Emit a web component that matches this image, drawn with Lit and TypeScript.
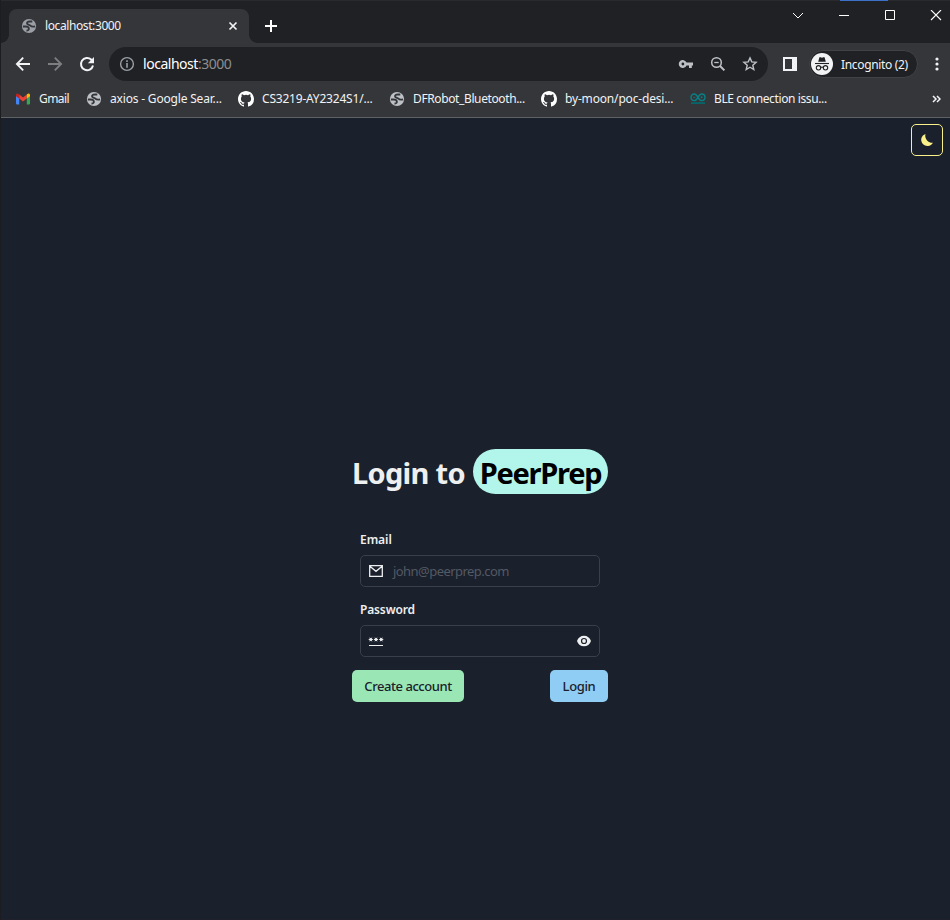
import { LitElement, html, css, svg } from "lit";
import { customElement, property } from "lit/decorators.js";

const globe = svg`<circle cx="8" cy="8" r="7.100" fill="currentColor"/><path d="M11.300 3.500H8.800C6.600 3.500 5.600 4.500 6.100 5.700 6.600 6.900 8.500 6.600 9.400 7.600 10.400 8.700 11.800 8.800 14.100 8.300M1.900 8.500H4.600C6.500 8.500 7.900 9.300 7.900 10.700 7.900 12 6.900 12.600 5.500 12.500" fill="none" stroke="#35363a" stroke-width="1.800"/>`;
const github = svg`<path fill="#fff" fill-rule="evenodd" d="M8 0C3.580 0 0 3.580 0 8c0 3.540 2.290 6.530 5.470 7.590.4.070.55-.17.55-.38 0-.19-.01-.82-.01-1.490-2.010.37-2.530-.49-2.690-.94-.09-.23-.48-.94-.82-1.130-.28-.15-.68-.52-.01-.53.63-.01 1.080.58 1.230.82.720 1.210 1.870.87 2.330.66.070-.52.280-.87.510-1.070-1.780-.2-3.640-.89-3.640-3.950 0-.87.310-1.590.82-2.150-.08-.2-.36-1.020.08-2.120 0 0 .67-.21 2.200.82a7.600 7.600 0 0 1 4 0c1.530-1.040 2.200-.82 2.200-.82.440 1.100.160 1.920.080 2.120.510.560.820 1.270.820 2.150 0 3.070-1.870 3.750-3.650 3.950.290.250.540.730.540 1.480 0 1.070-.01 1.930-.01 2.200 0 .210.150.460.550.380A8 8 0 0 0 16 8c0-4.420-3.580-8-8-8z"/>`;

const icons: Record<string, { box: string; art: unknown }> = {
  globe: { box: "0 0 16 16", art: globe },
  github: { box: "0 0 16 16", art: github },
  gmail: {
    box: "0 0 16 16",
    art: svg`<path fill="#4285f4" d="M1 4.200 4.200 6.600V13.500H2A1 1 0 0 1 1 12.500z"/><path fill="#34a853" d="M11.800 6.600 15 4.200V12.500A1 1 0 0 1 14 13.500H11.800z"/><path fill="#ea4335" d="M4.200 3.500 8 6.400 11.800 3.500V7.500L8 10.400 4.200 7.500z"/><path fill="#c5221f" d="M1 4C1 2.300 2.700 2 3.700 3L4.200 3.500V7.500L1 5.200z"/><path fill="#fbbc04" d="M15 4C15 2.300 13.300 2 12.300 3L11.800 3.500V7.500L15 5.200z"/>`,
  },
  arduino: {
    box: "0 0 16 16",
    art: svg`<g fill="none" stroke="#078184" stroke-width="1.400" transform="translate(0 .4)"><path d="M8 5.900C6.600 3.300 5.800 2.600 4.300 2.600a3.300 3.300 0 0 0 0 6.600C5.800 9.200 6.600 8.500 8 5.900 9.400 3.300 10.200 2.600 11.700 2.600a3.300 3.300 0 0 1 0 6.600C10.200 9.200 9.400 8.500 8 5.900z"/><path d="M3.200 5.900h2.200M10.600 5.900h2.200M11.700 4.800v2.200" stroke-width=".8"/></g><path d="M1 11.100h14v1.900H1z" fill="#086467"/>`,
  },
  close: { box: "0 0 10 10", art: svg`<path d="M1.500 1.500l7 7M8.500 1.500 1.500 8.500" fill="none" stroke="currentColor" stroke-width="1.700"/>` },
  plus: { box: "0 0 12 12", art: svg`<path d="M6 0v12M0 6h12" fill="none" stroke="currentColor" stroke-width="2"/>` },
  back: { box: "0 0 16 16", art: svg`<path d="M15 8H2.200M8.200 1.700 1.900 8l6.300 6.300" fill="none" stroke="currentColor" stroke-width="1.900"/>` },
  forward: { box: "0 0 16 16", art: svg`<path d="M1 8h12.800M7.800 1.700 14.100 8l-6.300 6.300" fill="none" stroke="currentColor" stroke-width="1.900"/>` },
  reload: { box: "0 0 16 16", art: svg`<path d="M14 9.500A6.100 6.100 0 1 1 12.200 3.600L13.500 5" fill="none" stroke="currentColor" stroke-width="2"/><path d="M15 1v6.200H8.800z" fill="currentColor"/>` },
  info: { box: "0 0 16 16", art: svg`<circle cx="8" cy="8" r="6.400" fill="none" stroke="currentColor" stroke-width="1.400"/><path d="M7.200 7h1.600v4.700H7.200zM7.200 4.300h1.600v1.600H7.200z" fill="currentColor"/>` },
  key: { box: "0 0 16 16", art: svg`<path fill="currentColor" fill-rule="evenodd" d="M8.500 6.600A4 4 0 1 0 8.500 9.400H11V12h2.800V9.400H15V6.600zM4.900 6.600a1.400 1.400 0 1 1 0 2.800 1.400 1.400 0 0 1 0-2.800z"/>` },
  zoom: { box: "0 0 16 16", art: svg`<g fill="none" stroke="currentColor"><circle cx="6.500" cy="6.500" r="4.800" stroke-width="1.500"/><path d="M10 10l4.400 4.400" stroke-width="2"/><path d="M4.300 6.500h4.400" stroke-width="1.300"/></g>` },
  star: { box: "0 0 16 16", art: svg`<path d="M8 1.900l1.750 4 4.350.4-3.300 2.900 1 4.300L8 11.200l-3.800 2.300 1-4.300-3.300-2.900 4.350-.4z" fill="none" stroke="currentColor" stroke-width="1.400"/>` },
  panel: { box: "0 0 14 14", art: svg`<path fill="currentColor" fill-rule="evenodd" d="M0 0h14v14H0zM2 2v10h7V2z"/>` },
  incognito: {
    box: "0 0 22 22",
    art: svg`<circle cx="11" cy="11" r="11" fill="#f1f3f4"/><path d="M7.200 8.700 8.300 4.700Q8.600 3.900 9.400 4.200L11 4.700 12.600 4.200Q13.400 3.900 13.700 4.700L14.800 8.700z" fill="#202124"/><path d="M4 10.500h14" stroke="#202124" stroke-width="1.100"/><g fill="none" stroke="#202124" stroke-width="1.100"><circle cx="7.500" cy="14.800" r="2.200"/><circle cx="14.500" cy="14.800" r="2.200"/><path d="M9.700 14.500Q11 13.600 12.300 14.500"/></g>`,
  },
  dots: { box: "0 0 4 14", art: svg`<g fill="currentColor"><circle cx="2" cy="2" r="1.600"/><circle cx="2" cy="7" r="1.600"/><circle cx="2" cy="12" r="1.600"/></g>` },
  more: { box: "0 0 9 8", art: svg`<path d="M1 1l3 3-3 3M5 1l3 3-3 3" fill="none" stroke="currentColor" stroke-width="1.500"/>` },
  chevron: { box: "0 0 12 12", art: svg`<path d="M1 3l5 5 5-5" fill="none" stroke="currentColor" stroke-width="1"/>` },
  minimize: { box: "0 0 12 12", art: svg`<path d="M1 5h10v1H1z" fill="currentColor"/>` },
  maximize: { box: "0 0 12 12", art: svg`<path d="M1.500 .5h9v9h-9z" fill="none" stroke="currentColor"/>` },
  exit: { box: "0 0 12 12", art: svg`<path d="M1 0l10 10M11 0 1 10" fill="none" stroke="currentColor" stroke-width="1.100"/>` },
  moon: { box: "0 0 14 14", art: svg`<path d="M5.500.9A7 7 0 0 0 12.900 9.700 6.200 6.200 0 1 1 5.500.9z" fill="currentColor"/>` },
  mail: { box: "0 0 16 16", art: svg`<path d="M1.700 2.700h12.600v10.600H1.700zM1.900 3.200 8 8.300l6.100-5.100" fill="none" stroke="currentColor" stroke-width="1.300"/>` },
  password: { box: "0 0 16 16", art: svg`<g fill="currentColor"><circle cx="2.800" cy="6.500" r="1.350"/><circle cx="8" cy="6.500" r="1.350"/><circle cx="13.200" cy="6.500" r="1.350"/></g><path d="M.7 6.500h4.200M1.750 4.700l2.100 3.600M3.850 4.700l-2.100 3.600M5.900 6.500h4.200M6.950 4.700l2.100 3.600M9.050 4.700l-2.100 3.600M11.100 6.500h4.200M12.150 4.700l2.100 3.600M14.250 4.700l-2.100 3.600" stroke="currentColor" stroke-width=".9"/><path d="M1 12h14v1H1z" fill="currentColor"/>` },
  eye: { box: "0 0 14 14", art: svg`<path fill="currentColor" fill-rule="evenodd" d="M7 1.700C3.700 1.700 1.100 3.700 0 7c1.100 3.300 3.700 5.300 7 5.300s5.900-2 7-5.300C12.900 3.700 10.300 1.700 7 1.700zM7 3.900a3.100 3.100 0 1 1 0 6.200 3.100 3.100 0 0 1 0-6.200z"/><circle cx="7" cy="7" r="1.900" fill="currentColor"/>` },
};

@customElement("ui-icon")
class UiIcon extends LitElement {
  @property() name = "globe";
  static styles = css`
    :host { display: block; flex: none; width: 16px; height: 16px; }
    svg { display: block; width: 100%; height: 100%; }
  `;
  render() {
    const icon = icons[this.name];
    return html`<svg viewBox=${icon.box}>${icon.art}</svg>`;
  }
}

@customElement("browser-chrome")
class BrowserChrome extends LitElement {
  static styles = css`
    :host { display: block; height: 118px; box-sizing: border-box; border-bottom: 1px solid #5f6265; background: #35363a; color: #f1f3f4; font-size: 12px; line-height: 16px; white-space: nowrap; }
    .strip { position: relative; height: 43px; box-sizing: border-box; background: #202124; display: flex; align-items: flex-end; padding-left: 8px; border-top: 1px solid #292a2b; }
    .accent { position: absolute; top: -1px; left: 839px; width: 48px; height: 1px; background: #3b72c8; }
    .tab { position: relative; width: 240px; height: 34px; box-sizing: border-box; border-radius: 8px 8px 0 0; background: #35363a; display: flex; align-items: center; padding: 0 11px 0 12px; }
    .tab::before, .tab::after { content: ""; position: absolute; bottom: 0; width: 8px; height: 8px; }
    .tab::before { left: -8px; background: radial-gradient(circle at 0 0, #202124 7.500px, #35363a 8px); }
    .tab::after { right: -8px; background: radial-gradient(circle at 100% 0, #202124 7.500px, #35363a 8px); }
    .tab .favicon { color: #9aa0a6; margin-right: 8px; }
    .tab .title { flex: 1; letter-spacing: -0.4px; }
    .tab .shut { width: 10px; height: 10px; }
    .add { width: 12px; height: 12px; margin: 0 0 11px 16px; color: #fff; }
    .window { margin-left: auto; display: flex; gap: 34px; padding: 0 8px 21px 0; color: #fff; }
    .window ui-icon { width: 12px; height: 12px; }
    .bar { height: 41px; display: flex; align-items: center; padding-left: 14px; }
    .forward { margin: 0 16px; color: #7d7e80; }
    .address { width: 659px; height: 34px; box-sizing: border-box; border-radius: 17px; background: #202124; display: flex; align-items: center; margin-left: 14px; padding: 0 10px; color: #bdc1c6; }
    .address .info { margin-right: 8px; color: #9aa0a6; }
    .url { flex: 1; font-size: 14px; color: #8b8e92; letter-spacing: -0.47px; }
    .url b { font-weight: 400; color: #fff; }
    .tools { display: flex; gap: 16px; }
    .panel { width: 14px; height: 14px; margin: 0 12px 0 15px; }
    .profile { width: 109px; height: 28px; box-sizing: border-box; border: 1px solid #414246; border-radius: 14px; background: #202124; display: flex; align-items: center; padding-left: 1px; }
    .profile ui-icon { width: 22px; height: 22px; margin-right: 8px; }
    .profile span { padding-top: 2px; letter-spacing: -0.33px; }
    .dots { width: 4px; height: 14px; margin-left: 17px; }
    .bookmarks { height: 30px; display: flex; align-items: center; padding-left: 14px; }
    .mark { box-sizing: border-box; display: flex; align-items: center; gap: 8px; }
    .mark ui-icon { color: #bdc1c6; }
    .gmail { width: 71px; letter-spacing: -0.55px; }
    .axios { width: 152px; letter-spacing: -0.18px; }
    .course { width: 151px; letter-spacing: -0.2px; }
    .robot { width: 152px; letter-spacing: -0.38px; }
    .moon { width: 149px; letter-spacing: -0.17px; }
    .ble { width: 160px; letter-spacing: -0.38px; }
    .more { width: 9px; height: 8px; margin-left: auto; margin-right: 9px; }
  `;
  private marks = [
    ["gmail", "gmail", "Gmail"],
    ["axios", "globe", "axios - Google Sear..."],
    ["course", "github", "CS3219-AY2324S1/..."],
    ["robot", "globe", "DFRobot_Bluetooth..."],
    ["moon", "github", "by-moon/poc-desi..."],
    ["ble", "arduino", "BLE connection issu..."],
  ];
  render() {
    return html`
      <div class="strip">
        <i class="accent"></i>
        <div class="tab"><ui-icon class="favicon" name="globe"></ui-icon><span class="title">localhost:3000</span><ui-icon class="shut" name="close"></ui-icon></div>
        <ui-icon class="add" name="plus"></ui-icon>
        <div class="window">${["chevron", "minimize", "maximize", "exit"].map((n) => html`<ui-icon name=${n}></ui-icon>`)}</div>
      </div>
      <div class="bar">
        <ui-icon name="back"></ui-icon><ui-icon class="forward" name="forward"></ui-icon><ui-icon name="reload"></ui-icon>
        <div class="address">
          <ui-icon class="info" name="info"></ui-icon><span class="url"><b>localhost</b>:3000</span>
          <div class="tools"><ui-icon name="key"></ui-icon><ui-icon name="zoom"></ui-icon><ui-icon name="star"></ui-icon></div>
        </div>
        <ui-icon class="panel" name="panel"></ui-icon>
        <div class="profile"><ui-icon name="incognito"></ui-icon><span>Incognito (2)</span></div>
        <ui-icon class="dots" name="dots"></ui-icon>
      </div>
      <div class="bookmarks">
        ${this.marks.map(([cls, icon, text]) => html`<div class="mark ${cls}"><ui-icon name=${icon}></ui-icon><span>${text}</span></div>`)}
        <ui-icon class="more" name="more"></ui-icon>
      </div>
    `;
  }
}

@customElement("login-form")
class LoginForm extends LitElement {
  static styles = css`
    :host { display: block; width: 256px; color: #eeeff0; font-size: 13px; white-space: nowrap; }
    h1 { margin: 0; height: 45px; display: flex; justify-content: space-between; align-items: center; font-size: 29px; line-height: 45px; font-weight: 700; letter-spacing: -0.7px; }
    h1 span { padding-top: 2px; line-height: 43px; }
    .brand { box-sizing: border-box; width: 135px; height: 45px; border-radius: 23px; background: #b2f5ea; color: #000; text-align: center; letter-spacing: -1.250px; }
    .fields { padding: 36px 8px 0; }
    label { display: block; height: 20px; margin-bottom: 5px; line-height: 20px; font-size: 12px; font-weight: 600; letter-spacing: -0.05px; }
    .password { letter-spacing: -0.15px; }
    .field { height: 32px; box-sizing: border-box; border: 1px solid #3a3f4a; border-radius: 5px; display: flex; align-items: center; padding: 0 8px 0 7px; margin-bottom: 13px; }
    .hint { margin-left: 9px; color: #545963; letter-spacing: -0.55px; }
    .eye { width: 14px; height: 14px; margin-left: auto; }
    .actions { display: flex; justify-content: space-between; }
    button { height: 32px; border: 0; border-radius: 5px; padding: 0; font: inherit; font-weight: 500; color: #1a202c; }
    .create { width: 112px; background: #9ae6b4; letter-spacing: -0.45px; }
    .login { width: 58px; background: #90cdf4; letter-spacing: -0.35px; }
  `;
  render() {
    return html`
      <h1><span>Login to</span><span class="brand">PeerPrep</span></h1>
      <div class="fields">
        <label>Email</label>
        <div class="field"><ui-icon name="mail"></ui-icon><span class="hint">john@peerprep.com</span></div>
        <label class="password">Password</label>
        <div class="field"><ui-icon name="password"></ui-icon><ui-icon class="eye" name="eye"></ui-icon></div>
      </div>
      <div class="actions"><button class="create">Create account</button><button class="login">Login</button></div>
    `;
  }
}

@customElement("app-root")
class AppRoot extends LitElement {
  static styles = css`
    :host { display: flex; flex-direction: column; box-sizing: border-box; width: 950px; height: 920px; border-left: 1px solid #1c1d20; background: #1a202c; font-family: "Noto Sans", "Open Sans", sans-serif; overflow: hidden; }
    main { flex: 1; display: flex; flex-direction: column; border-bottom: 1px solid #20202a; }
    .theme { align-self: flex-end; width: 32px; height: 32px; box-sizing: border-box; margin: 6px 7px 0 0; border: 1px solid #faf089; border-radius: 5px; display: grid; place-items: center; color: #faf089; }
    .theme ui-icon { width: 14px; height: 14px; }
    login-form { margin: 293px 0 0 351px; }
  `;
  render() {
    return html`
      <browser-chrome></browser-chrome>
      <main>
        <div class="theme"><ui-icon name="moon"></ui-icon></div>
        <login-form></login-form>
      </main>
    `;
  }
}
